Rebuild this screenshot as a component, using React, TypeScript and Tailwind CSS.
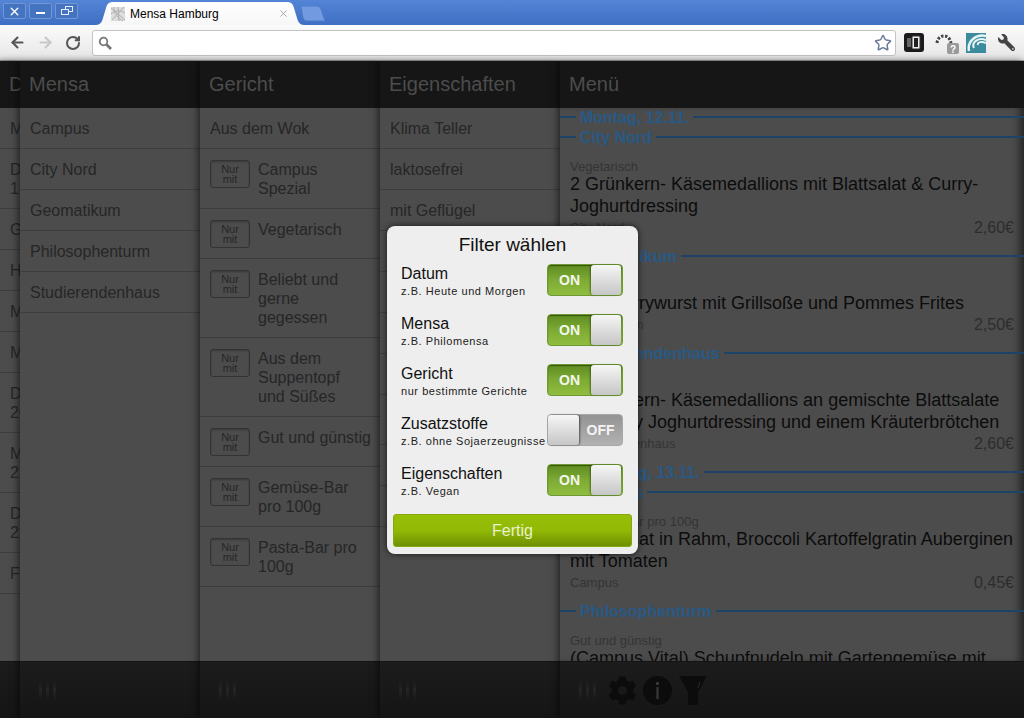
import { ArrowLeft, ArrowRight, RotateCw, Star, X } from "lucide-react";
import { FaCog, FaWrench } from "react-icons/fa";

const FONT = "font-['Liberation_Sans',Arial,sans-serif]";

const DATES: [string, number][] = [
  ["Montag", 41],
  ["Dienstag, 13.11.", 60],
  ["Gestern", 41],
  ["Heute", 41],
  ["Morgen", 41],
  ["Montag", 41],
  ["Dienstag, 20.11.", 60],
  ["Mittwoch, 21.11.", 60],
  ["Donnerstag, 22.11.", 60],
  ["Freitag", 41],
];

const MENSEN = ["Campus", "City Nord", "Geomatikum", "Philosophenturm", "Studierendenhaus"];

const GERICHTE: [string, number][] = [
  ["Campus\nSpezial", 60],
  ["Vegetarisch", 50],
  ["Beliebt und\ngerne\ngegessen", 79],
  ["Aus dem\nSuppentopf\nund Süßes", 79],
  ["Gut und günstig", 50],
  ["Gemüse-Bar\npro 100g", 60],
  ["Pasta-Bar pro\n100g", 60],
];

const EIGENSCHAFTEN: [string, number][] = [
  ["Klima Teller", 41],
  ["laktosefrei", 41],
  ["mit Geflügel", 41],
  ["mit Rind", 41],
  ["mit Schwein", 41],
  ["mit Fisch", 41],
  ["mit Lamm", 41],
  ["vegan", 50],
  ["vegetarisch", 41],
  ["Bio", 41],
];

const FILTERS = [
  { title: "Datum", hint: "z.B. Heute und Morgen", on: true },
  { title: "Mensa", hint: "z.B. Philomensa", on: true },
  { title: "Gericht", hint: "nur bestimmte Gerichte", on: true },
  { title: "Zusatzstoffe", hint: "z.B. ohne Sojaerzeugnisse", on: false },
  { title: "Eigenschaften", hint: "z.B. Vegan", on: true },
];

function Section({ label }: { label: string }) {
  return (
    <div className="flex h-5 items-center pb-[2px]">
      <div className="h-[2px] w-4 bg-[#1d4468]" />
      <span className="mx-1 mt-[2px] text-base font-bold text-[#285985]">{label}</span>
      <div className="h-[2px] flex-1 bg-[#1d4468]" />
    </div>
  );
}

function Dish({ cat, title, place, price }: { cat: string; title: string; place: string; price?: string }) {
  return (
    <div className="px-[10px] pt-3 pb-[9px]">
      <div className="h-[13px] text-[13px] leading-[14px] text-[#343434]">{cat}</div>
      <div className="text-lg leading-[22px] text-[#0c0c0c]">{title}</div>
      <div className="flex h-[21px] items-center justify-between text-[13px] text-[#343434]">
        <span>{place}</span>
        <span className="text-base text-[#2c2c2c]">{price}</span>
      </div>
    </div>
  );
}

function Grip() {
  return (
    <div className="flex h-5 w-[17px] justify-between">
      <div className="w-[3px] bg-linear-to-b from-transparent via-[#242424] to-transparent" />
      <div className="w-[3px] bg-linear-to-b from-transparent via-[#242424] to-transparent" />
      <div className="w-[3px] bg-linear-to-b from-transparent via-[#242424] to-transparent" />
    </div>
  );
}

function Column({
  title,
  className,
  children,
  footer,
}: {
  title: string;
  className: string;
  children: React.ReactNode;
  footer?: React.ReactNode;
}) {
  return (
    <div className={`relative flex h-full flex-col bg-[#4c4c4c] shadow-[-2px_0_7px_rgba(0,0,0,0.55)] ${className}`}>
      <div className="z-10 flex h-[47px] shrink-0 items-center overflow-hidden whitespace-nowrap bg-[#161616] pb-[2px] pl-[9px] text-xl text-[#4c4c4c]">
        {title}
      </div>
      <div className="min-h-0 flex-1 overflow-hidden">{children}</div>
      <div className="flex h-[57px] shrink-0 items-center gap-[12px] border-t border-[#141414] bg-linear-to-b from-[#1c1c1c] to-[#151515] pl-[19px]">
        {footer ?? <Grip />}
      </div>
    </div>
  );
}

function Toggle({ on }: { on: boolean }) {
  if (on) {
    return (
      <div className="flex h-8 w-[76px] shrink-0 items-center justify-end rounded-[4px] border border-[#6f9a33] bg-linear-to-b from-[#5f8c22] via-[#7dab33] to-[#90bd40] pr-px shadow-[inset_0_1px_1px_rgba(40,70,0,0.8)]">
        <span className="flex-1 text-center text-sm font-bold text-[#f4f7ee]">ON</span>
        <div className="h-[30px] w-[30px] rounded-[3px] bg-linear-to-b from-[#f6f6f6] to-[#c6c6c6] shadow-[-1px_0_2px_rgba(0,0,0,0.4)]" />
      </div>
    );
  }
  return (
    <div className="flex h-8 w-[76px] shrink-0 items-center rounded-[4px] border border-[#a8a8a8] bg-linear-to-b from-[#939393] to-[#b2b2b2]">
      <div className="h-[30px] w-[31px] rounded-[3px] bg-linear-to-b from-[#f6f6f6] to-[#c6c6c6] shadow-[1px_0_2px_rgba(0,0,0,0.5)]" />
      <span className="flex-1 text-center text-sm font-bold text-[#f4f4f4]">OFF</span>
    </div>
  );
}

function WindowButton({ children }: { children: React.ReactNode }) {
  return (
    <div className="flex h-4 w-[23px] items-center justify-center rounded-[2px] border border-[#7396d4] bg-[#4473c0]">
      {children}
    </div>
  );
}

function Browser() {
  return (
    <div className="shrink-0">
      {/* title bar */}
      <div className="relative flex h-[25px] items-start bg-linear-to-b from-[#5384d6] to-[#3f6fc2] pt-[3px] pl-[3px]">
        <div className="flex gap-[3px]">
          <WindowButton>
            <X size={13} strokeWidth={2.5} className="text-white" />
          </WindowButton>
          <WindowButton>
            <div className="mt-[3px] h-[2px] w-[9px] bg-white" />
          </WindowButton>
          <WindowButton>
            <svg width="12" height="10" viewBox="0 0 12 10" fill="none" stroke="#e8eefa">
              <rect x="4.5" y="0.5" width="7" height="5" />
              <rect x="0.5" y="3.5" width="7" height="5" fill="#4473c0" />
            </svg>
          </WindowButton>
        </div>
        <div className="absolute top-[2px] left-[96px] h-[23px] w-[208px]">
          <svg className="absolute inset-0" width="208" height="23" viewBox="0 0 208 23">
            <defs>
              <linearGradient id="tabfill" x1="0" y1="0" x2="0" y2="1">
                <stop offset="0" stopColor="#ffffff" />
                <stop offset="1" stopColor="#f7f7f7" />
              </linearGradient>
            </defs>
            <path
              d="M0 23 C4 23 6 20 7 16 L10 6 C11 2 13 0 17 0 H191 C195 0 197 2 198 6 L201 16 C202 20 204 23 208 23 Z"
              fill="url(#tabfill)"
            />
          </svg>
          <svg className="absolute top-[4px] left-[14px]" width="16" height="16" viewBox="0 0 16 16" fill="none">
            <rect x="1" y="1" width="14" height="14" fill="#dddddd" />
            <path d="M1 2 L15 14 M2 14 L14 1 M1 8 C5 4 10 4 15 7 M4 1 C3 7 8 12 13 15 M8 1 L9 15" stroke="#b0b0b0" />
          </svg>
          <span className="absolute top-[4px] left-[34px] text-xs leading-[16px] text-black">Mensa Hamburg</span>
          <X size={11} strokeWidth={2} className="absolute top-[6px] left-[182px] text-[#a0a0a0]" />
        </div>
        <svg className="absolute top-[6px] left-[300px]" width="26" height="16" viewBox="0 0 26 16">
          <path d="M1 1 Q1 0 3 0 H17 Q20 0 21 3 L25 15 H6 Q4 15 3 12 Z" fill="#719ae0" stroke="#4d7ac8" />
        </svg>
      </div>
      {/* toolbar */}
      <div className="flex h-9 items-center border-b border-[#a9a9a9] bg-linear-to-b from-[#fbfbfb] to-[#e6e6e6]">
        <div className="flex w-[92px] shrink-0 items-center gap-[11px] pl-[9px]">
          <ArrowLeft size={17} strokeWidth={3} className="text-[#555555]" />
          <ArrowRight size={17} strokeWidth={3} className="text-[#c8c8c8]" />
          <RotateCw size={16} strokeWidth={3} className="text-[#555555]" />
        </div>
        <div className="flex h-[26px] w-[804px] shrink-0 items-center justify-between rounded-[3px] border border-[#c4c4c4] bg-white pr-[3px] pl-[5px]">
          <svg width="14" height="14" viewBox="0 0 14 14" fill="none" stroke="#777777">
            <circle cx="5.5" cy="5.5" r="3.8" strokeWidth="1.8" />
            <path d="M8.5 8.5 L13 13" strokeWidth="2.8" />
          </svg>
          <Star size={18} strokeWidth={2} className="text-[#6b7b9e]" />
        </div>
        <div className="flex flex-1 items-center pl-[8px]">
          <svg width="20" height="19" viewBox="0 0 20 19">
            <rect width="20" height="19" rx="3" fill="#1b1b1b" />
            <rect x="3" y="5" width="4" height="9" fill="#666" />
            <rect x="8" y="3" width="8" height="13" rx="1" fill="#eee" stroke="#333" />
            <rect x="10" y="5" width="4" height="9" fill="#222" />
          </svg>
          <svg className="ml-[11px]" width="24" height="24" viewBox="0 0 24 24" fill="none">
            <path d="M2 12 C3 3 14 2 16 12" stroke="#444" strokeWidth="3" strokeDasharray="2.4 1.6" />
            <rect x="12" y="12" width="12" height="11" rx="2" fill="#9a9a9a" />
            <text x="18" y="21.5" textAnchor="middle" fontSize="10" fontWeight="700" fill="#fff">
              ?
            </text>
          </svg>
          <svg className="ml-[7px]" width="20" height="20" viewBox="0 0 20 20" fill="none">
            <rect width="20" height="20" fill="#3c8c9e" />
            <path d="M3 18 C1 8 10 1 20 3" stroke="#e6f4f6" strokeWidth="2.5" />
            <path d="M8 15 C5 9 13 4 20 7" stroke="#e6f4f6" strokeWidth="2" />
            <path d="M12 12 C11 9 16 8 20 10" stroke="#e6f4f6" strokeWidth="2" />
          </svg>
          <FaWrench size={17} className="ml-[12px] -scale-x-100 text-[#444444]" />
        </div>
      </div>
    </div>
  );
}

function Dialog() {
  return (
    <div className="absolute top-[226px] left-[387px] z-50 flex h-[328px] w-[251px] flex-col rounded-lg bg-[#eeeeee] px-[6px] pt-[7px] shadow-[0_0_6px_rgba(0,0,0,0.7)]">
      <div className="h-[25px] text-center text-[19px] leading-[24px] text-[#111111]">Filter wählen</div>
      <div className="mt-[6px] flex flex-col gap-[18px] pr-[9px] pl-2">
        {FILTERS.map((f) => (
          <div key={f.title} className="flex h-8 items-start justify-between">
            <div className="w-[146px] whitespace-nowrap pt-px">
              <div className="text-base leading-[18px] text-[#111111]">{f.title}</div>
              <div className="text-[11px] leading-[17px] tracking-[0.55px] text-[#222222]">{f.hint}</div>
            </div>
            <Toggle on={f.on} />
          </div>
        ))}
      </div>
      <div className="mt-[18px] flex h-[33px] items-center justify-center rounded-[3px] border border-[#86a80e] bg-linear-to-b from-[#97bf07] via-[#92b906] to-[#6f8f02] text-base text-[#e9f1cf]">
        Fertig
      </div>
    </div>
  );
}

export default function App() {
  return (
    <div className={`relative flex h-[718px] w-[1024px] flex-col overflow-hidden bg-[#4c4c4c] ${FONT}`}>
      <Browser />
      <div className="flex min-h-0 flex-1">
        {/* Datum, only its edge shows */}
        <Column title="Datum" className="z-0 w-5 shrink-0 overflow-hidden" footer={<div />}>
          <div className="w-[110px]">
            {DATES.map(([d, h], i) => (
              <div
                key={i}
                style={{ height: h }}
                className="flex items-center border-b border-[#3d3d3d] pt-px pl-[10px] text-base leading-[19px] text-[#262626]"
              >
                {d}
              </div>
            ))}
          </div>
        </Column>

        <Column title="Mensa" className="z-10 w-[180px] shrink-0">
          {MENSEN.map((m) => (
            <div key={m} className="flex h-[41px] items-center border-b border-[#3d3d3d] pt-px pl-[10px] text-base text-[#262626]">
              {m}
            </div>
          ))}
        </Column>

        <Column title="Gericht" className="z-20 w-[180px] shrink-0">
          <div className="flex h-[41px] items-center border-b border-[#3d3d3d] pt-px pl-[10px] text-base text-[#262626]">
            Aus dem Wok
          </div>
          {GERICHTE.map(([g, h]) => (
            <div key={g} style={{ height: h }} className="flex gap-2 border-b border-[#3d3d3d] pt-[11px] pl-[10px]">
              <div className="flex h-7 w-10 shrink-0 flex-col items-center justify-center rounded-[3px] border border-[#333333] text-[11px] leading-[10px] text-[#262626] shadow-[inset_0_1px_2px_rgba(0,0,0,0.25)]">
                <span>Nur</span>
                <span>mit</span>
              </div>
              <div className="text-base leading-[19px] whitespace-pre-line text-[#262626]">{g}</div>
            </div>
          ))}
        </Column>

        <Column title="Eigenschaften" className="z-30 w-[180px] shrink-0">
          {EIGENSCHAFTEN.map(([e, h]) => (
            <div
              key={e}
              style={{ height: h }}
              className="flex items-center border-b border-[#3d3d3d] pt-px pl-[10px] text-base text-[#262626]"
            >
              {e}
            </div>
          ))}
        </Column>

        <Column
          title="Menü"
          className="z-40 flex-1"
          footer={
            <>
              <Grip />
              <FaCog size={29} className="text-[#0c0c0c]" />
              <svg className="-ml-[6px]" width="29" height="29" viewBox="0 0 29 29">
                <circle cx="14.5" cy="14.5" r="14.5" fill="#0c0c0c" />
                <rect x="13" y="6" width="3" height="3" fill="#363636" />
                <rect x="13.3" y="11" width="2.4" height="12" fill="#363636" />
              </svg>
              <svg className="-ml-[5px]" width="28" height="29" viewBox="0 0 28 29">
                <path d="M0 0 H28 L19 16 V29 H9 V16 Z" fill="#0c0c0c" />
                <path d="M21 6 L19 12" stroke="#2c2c2c" strokeWidth="1" />
              </svg>
            </>
          }
        >
          <div className="h-full shadow-[inset_-8px_0_8px_-4px_rgba(0,0,0,0.55)]">
            <Section label="Montag, 12.11." />
            <Section label="City Nord" />
            <Dish
              cat="Vegetarisch"
              title="2 Grünkern- Käsemedallions mit Blattsalat & Curry-Joghurtdressing"
              place="City Nord"
              price="2,60€"
            />
            <Section label="Geomatikum" />
            <Dish cat="Klima Teller" title="Tofu-Currywurst mit Grillsoße und Pommes Frites" place="Geomatikum" price="2,50€" />
            <Section label="Studierendenhaus" />
            <Dish
              cat="Vegetarisch"
              title="2 Grünkern- Käsemedallions an gemischte Blattsalate mit Curry Joghurtdressing und einem Kräuterbrötchen"
              place="Studierendenhaus"
              price="2,60€"
            />
            <Section label="Dienstag, 13.11." />
            <Section label="Campus" />
            <Dish
              cat="Gemüse-Bar pro 100g"
              title="Blattspinat in Rahm, Broccoli Kartoffelgratin Auberginen mit Tomaten"
              place="Campus"
              price="0,45€"
            />
            <Section label="Philosophenturm" />
            <Dish cat="Gut und günstig" title="(Campus Vital) Schupfnudeln mit Gartengemüse mit Kräutersoße" place="Philosophenturm" />
          </div>
        </Column>
      </div>
      <Dialog />
    </div>
  );
}
